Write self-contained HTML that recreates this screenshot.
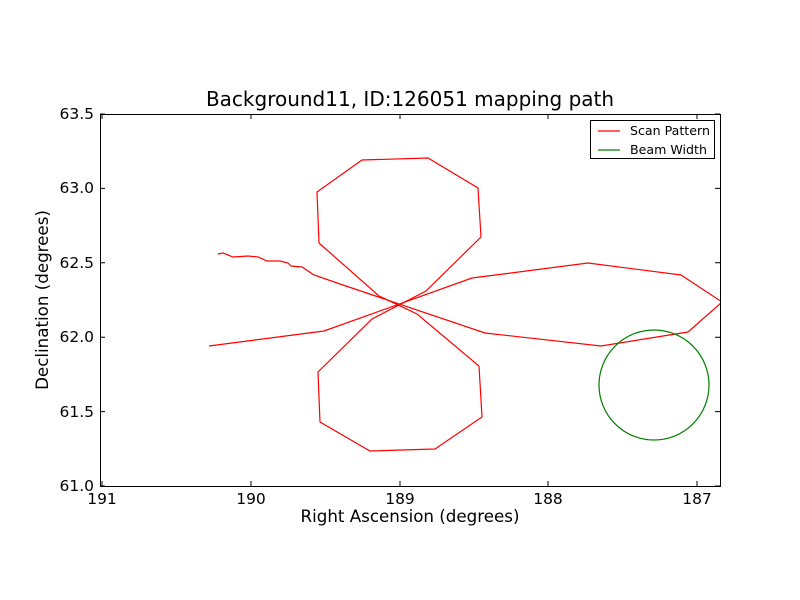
<!DOCTYPE html>
<html><head><meta charset="utf-8"><style>
html,body{margin:0;padding:0;background:#fff;}
svg{display:block;font-family:"DejaVu Sans","Liberation Sans",sans-serif;}
</style></head><body>
<svg width="800" height="600" viewBox="0 0 800 600" xmlns="http://www.w3.org/2000/svg">
<rect width="800" height="600" fill="#fff"/>
<defs><clipPath id="c"><rect x="100" y="114" width="620" height="372"/></clipPath></defs>
<g clip-path="url(#c)" fill="none" stroke-width="1.2" stroke-linejoin="miter">
<polyline stroke="#f00" points="209,346 324,331 472,278 588,263 681,275 722,302 688,332 601,346 485,333 340,284 314,275 302,267 291,266 288,263 280,261 267,261 258,257 248,256 233,257 223,253 218,254"/>
<polyline stroke="#f00" points="319,243 379,296 417,314 479,366 482,417 435,449 370,451 320,422 318,372 372,319 426,291 481,237 478,188 428,158 362,160 317,192 319,243"/>
<ellipse cx="654" cy="385" rx="55" ry="55" stroke="#008000"/>
</g>
<rect x="100.5" y="114.5" width="620" height="372" fill="none" stroke="#000" stroke-width="1"/>
<g stroke="#000" stroke-width="1">
<path d="M102,486v-5M251,486v-5M400,486v-5M548,486v-5M697,486v-5M102,114v5M251,114v5M400,114v5M548,114v5M697,114v5"/>
<path d="M100,114h5M100,188.4h5M100,262.8h5M100,337.2h5M100,411.6h5M100,486h5M720,114h-5M720,188.4h-5M720,262.8h-5M720,337.2h-5M720,411.6h-5M720,486h-5"/>
</g>
<g font-size="15.5" fill="#000" text-anchor="middle">
<text x="102" y="504">191</text><text x="251" y="504">190</text><text x="400" y="504">189</text><text x="548" y="504">188</text><text x="697" y="504">187</text>
</g>
<g font-size="15.5" fill="#000" text-anchor="end">
<text x="94" y="119">63.5</text><text x="94" y="193">63.0</text><text x="94" y="268">62.5</text><text x="94" y="342">62.0</text><text x="94" y="417">61.5</text><text x="94" y="491">61.0</text>
</g>
<text x="410" y="522" font-size="16.7" text-anchor="middle">Right Ascension (degrees)</text>
<text transform="translate(48,300) rotate(-90)" font-size="16.7" text-anchor="middle">Declination (degrees)</text>
<text x="410" y="106" font-size="20" text-anchor="middle">Background11, ID:126051 mapping path</text>
<rect x="590.5" y="120.5" width="124" height="38" fill="#fff" stroke="#000"/>
<line x1="598" y1="131" x2="620" y2="131" stroke="#f00" stroke-width="1.2"/>
<line x1="598" y1="150" x2="620" y2="150" stroke="#008000" stroke-width="1.2"/>
<text x="630" y="135" font-size="12.6">Scan Pattern</text>
<text x="630" y="154" font-size="12.6">Beam Width</text>
</svg>
</body></html>
